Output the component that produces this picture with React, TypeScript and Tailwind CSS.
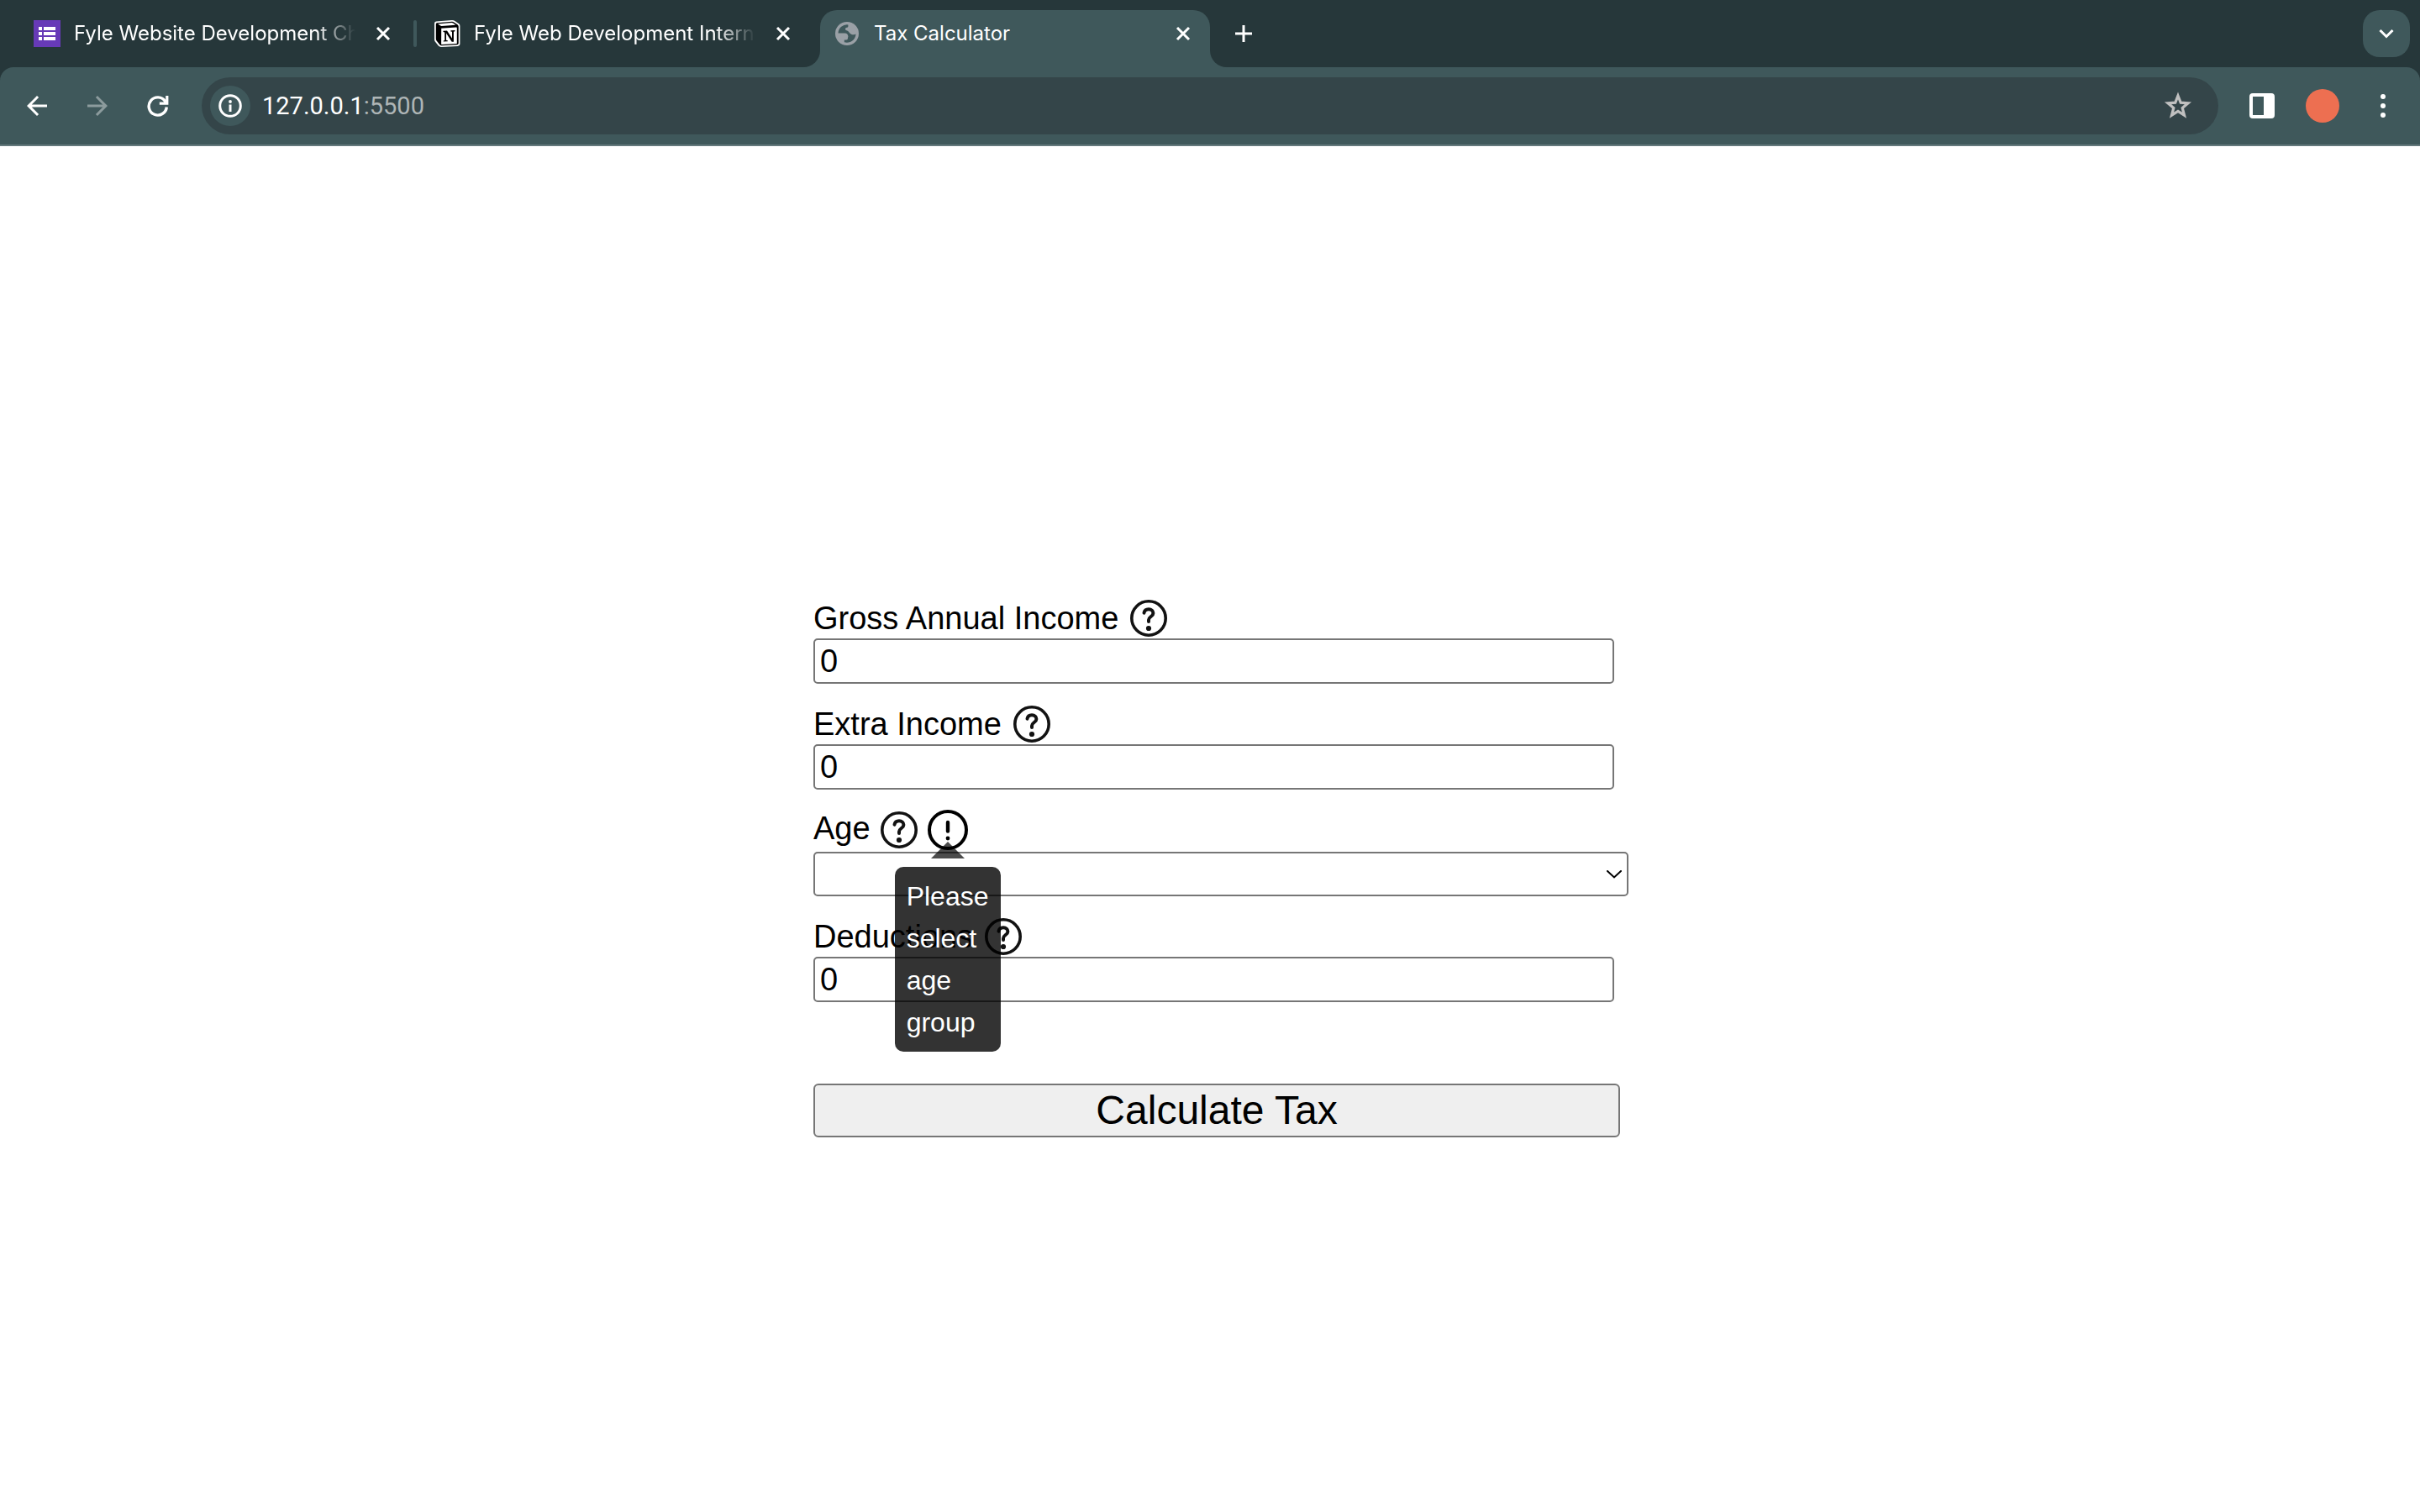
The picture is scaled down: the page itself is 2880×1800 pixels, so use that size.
import React from "react";
import { MdArrowBack, MdArrowForward } from "react-icons/md";

function CloseIcon() {
  return (
    <svg viewBox="0 0 18 18" className="size-[18px]" fill="none" stroke="currentColor" strokeWidth="3">
      <path d="M2 2 16 16M16 2 2 16" />
    </svg>
  );
}

function FormsIcon() {
  return (
    <svg viewBox="0 0 32 32" className="size-8 shrink-0">
      <path fill="#673ab7" d="M0 0h32v32H0z" />
      <path fill="#fff" d="M6 8h4v4H6zM6 14h4v4H6zM6 20h4v4H6zM12 8h14v4H12zM12 14h14v4H12zM12 20h14v4H12z" />
    </svg>
  );
}

function NotionIcon() {
  return (
    <svg viewBox="0 0 32 32" className="size-8 shrink-0">
      <path fill="#fff" d="M3 1.600 22 0q2 0 3.400 1l5 3.600Q31.400 5.500 31.400 7v21q0 2.600-2.800 2.900L9 32q-2 0-3.200-1.400L1.600 25.300Q1 24.300 1 23V4q0-2.200 2-2.400z" />
      <path fill="#000" d="m4 3.300 18-1.500q1.300 0 2.200.7l4.500 3.100q1 .8 1 2v20q0 1.500-1.600 1.600L9.500 30.300q-1.400 0-2.200-1L3.400 24.200q-.6-.8-.6-2V4.700q0-1.300 1.200-1.400z" />
      <path fill="#fff" d="m5 4.400 16.500-1.300q1 0 1.700.5l3 2.100L9.500 6.900q-1 0-1.700-.6zM9.200 9.700 27 8.600q.8 0 .8.800v17.800q0 .8-.8.900L10 29.100q-.9 0-.9-.9z" />
      <path fill="#000" d="M11.500 12.800 16 12.500l6 9.200v-7.900l-1.600-.3v-1.200l5-.3v1.200l-1.500.5v12l-2.200.1-6.700-10.200v8.200l1.800.4v1.100l-5.100.3v-1.100l1.500-.5V14.500l-1.700-.4z" />
    </svg>
  );
}

function GlobeIcon() {
  return (
    <svg viewBox="0 0 28 28" className="size-7 shrink-0">
      <circle cx="14" cy="14" r="14" fill="#9aa0a6" />
      <path
        fill="#3f585b"
        d="M3.500 13.500A10.600 10.600 0 0 1 15.400 3.400V5.200Q15.400 6.700 13.800 6.700 12 6.700 12 8.400 12 10 13.500 10.300 15.400 10.700 16.300 12.300 17.500 14.300 20 15.300 22.500 15.600 24.500 14.500A10.600 10.600 0 0 1 10.800 24.200V21.500H13.200Q15 21.500 15 19.600 15 18.500 15.400 17.500 15 13.500 11.500 13.500z"
      />
    </svg>
  );
}

function ReloadIcon() {
  return (
    <svg viewBox="0 0 26 26" className="size-[26px]">
      <path fill="none" stroke="#fff" strokeWidth="3.400" d="M21.500 7.500A10.600 10.600 0 1 0 23.300 14.500" />
      <path fill="#fff" d="M22.200 1H25.400V11.800H14.800V8.600H19.800L22.200 6z" />
    </svg>
  );
}

function HelpIcon() {
  return (
    <svg viewBox="0 0 44 44" className="size-11" fill="none" stroke="#121212" strokeWidth="3.600">
      <circle cx="22" cy="22" r="20.200" />
      <path
        strokeLinecap="round"
        strokeWidth="4"
        d="M16.500 15.700C17 12.700 19 11.300 22 11.300c3.400 0 5.400 2 5.400 4.600 0 4.100-5.400 4.100-5.400 8.100v2"
      />
      <circle cx="22" cy="34" r="3.100" fill="#121212" stroke="none" />
    </svg>
  );
}

function AlertIcon() {
  return (
    <svg viewBox="0 0 48 48" className="size-12" fill="none" stroke="#000" strokeWidth="4">
      <circle cx="24" cy="24" r="22" />
      <path strokeLinecap="round" strokeWidth="4.400" d="M24 15v10.500" />
      <circle cx="24" cy="34" r="2.400" fill="#000" stroke="none" />
    </svg>
  );
}

function BackgroundTab({ icon, title, className }: { icon: React.ReactNode; title: string; className: string }) {
  return (
    <div className={"flex h-20 items-center " + className}>
      {icon}
      <a
        href="#"
        className="ml-4 flex-1 overflow-hidden whitespace-nowrap [mask-image:linear-gradient(to_right,black_86%,transparent)]"
      >
        {title}
      </a>
      <button type="button" aria-label={"Close " + title} className="ml-6">
        <CloseIcon />
      </button>
    </div>
  );
}

function TabStrip() {
  return (
    <div className="flex h-20 items-center bg-[#26373a] pr-3 text-[24px] leading-8">
      <BackgroundTab icon={<FormsIcon />} title="Fyle Website Development Challenge" className="w-[465px] pl-10" />
      <div className="ml-[27px] h-8 w-1 rounded-full bg-[#3f585b]" />
      <BackgroundTab icon={<NotionIcon />} title="Fyle Web Development Internship" className="ml-5 w-[425px]" />
      <div className="ml-[15px] flex h-20 w-5 flex-col justify-end bg-[#3f585b]">
        <div className="h-full rounded-br-[20px] bg-[#26373a]" />
      </div>
      <div className="flex h-[68px] w-[464px] items-center self-end rounded-t-[20px] bg-[#3f585b] pb-3 pl-[18px]">
        <GlobeIcon />
        <a href="#" className="ml-[18px] flex-1">Tax Calculator</a>
        <button type="button" aria-label="Close Tax Calculator" className="mr-[23px]">
          <CloseIcon />
        </button>
      </div>
      <div className="h-20 w-5 bg-[#3f585b]">
        <div className="h-full rounded-bl-[20px] bg-[#26373a]" />
      </div>
      <button type="button" aria-label="New tab" className="ml-[10px]">
        <svg viewBox="0 0 20 20" className="size-5" stroke="currentColor" strokeWidth="3">
          <path d="M10 0v20M0 10h20" />
        </svg>
      </button>
      <button
        type="button"
        aria-label="Search tabs"
        className="ml-auto flex size-14 items-center justify-center rounded-[20px] bg-[#3f585b]"
      >
        <svg viewBox="0 0 18 12" className="h-3 w-[18px]" fill="none" stroke="currentColor" strokeWidth="3">
          <path d="m1.500 2 7.500 7.500L16.500 2" />
        </svg>
      </button>
    </div>
  );
}

function Toolbar() {
  return (
    <div className="bg-[#26373a]">
      <div className="flex h-[94px] items-center rounded-t-[16px] border-b-2 border-[#64797c] bg-[#3f585b] pl-[26px]">
        <button type="button" aria-label="Back"><MdArrowBack className="size-9" /></button>
        <button type="button" aria-label="Forward" className="ml-9 text-[#8c9b9d]"><MdArrowForward className="size-9" /></button>
        <button type="button" aria-label="Reload" className="ml-[41px]"><ReloadIcon /></button>
        <div className="ml-[39px] flex h-[68px] flex-1 items-center rounded-full bg-[#344549] pl-[10px] pr-[31px]">
          <button
            type="button"
            aria-label="View site information"
            className="flex size-12 items-center justify-center rounded-full bg-[#3f585b]"
          >
            <svg viewBox="0 0 28 28" className="size-7" fill="none" stroke="#fff" strokeWidth="3">
              <circle cx="14" cy="14" r="12.300" />
              <path d="M14 12.500V21" />
              <circle cx="14" cy="9" r="1.900" fill="#fff" stroke="none" />
            </svg>
          </button>
          <a href="#" className="ml-[14px] font-['Roboto',sans-serif] text-[29px] leading-9">
            127.0.0.1<span className="text-[#aeb5b6]">:5500</span>
          </a>
          <button type="button" aria-label="Bookmark this tab" className="ml-auto text-[#c0c0c0]">
            <svg viewBox="0 0 34 34" className="size-[34px]" fill="none" stroke="currentColor" strokeWidth="3.200">
              <path d="M17 5 20.200 13.200 29 13.800 22.200 19.500 24.500 28.200 17 23.500 9.500 28.200 11.800 19.500 5 13.800 13.800 13.200z" />
            </svg>
          </button>
        </div>
        <button type="button" aria-label="Side panel" className="ml-[37px]">
          <svg viewBox="0 0 30 30" className="size-[30px]">
            <rect x="2" y="2" width="26" height="26" rx="2" fill="none" stroke="#fff" strokeWidth="4" />
            <path fill="#fff" d="M17 2h11v26H17z" />
          </svg>
        </button>
        <button type="button" aria-label="Profile" className="ml-[37px] size-10 rounded-full bg-[#ed6f51]" />
        <button type="button" aria-label="Menu" className="ml-[49px] mr-[41px]">
          <svg viewBox="0 0 6 28" className="h-7 w-[6px]" fill="#fff">
            <circle cx="3" cy="3" r="3" />
            <circle cx="3" cy="14" r="3" />
            <circle cx="3" cy="25" r="3" />
          </svg>
        </button>
      </div>
    </div>
  );
}

function NumberField({ id, label }: { id: string; label: string }) {
  return (
    <div>
      <div className="flex items-center gap-[14px] pb-[2px]">
        <label htmlFor={id} className="leading-[44px]">{label}</label>
        <button type="button" aria-label={"About " + label}><HelpIcon /></button>
      </div>
      <input
        id={id}
        type="text"
        inputMode="numeric"
        defaultValue="0"
        className="block h-[54px] w-[calc(100%-7px)] rounded-[5px] border-2 border-[#767676] bg-white px-[6px]"
      />
    </div>
  );
}

function AgeField() {
  return (
    <div>
      <div className="flex items-center gap-3 pb-[2px]">
        <label htmlFor="age" className="self-start leading-[44px]">Age</label>
        <button type="button" aria-label="About Age"><HelpIcon /></button>
        <div className="relative">
          <button type="button" aria-label="Age error" aria-describedby="age-error" className="block">
            <AlertIcon />
          </button>
          <svg viewBox="0 0 40 20" className="absolute left-1 top-[38px] z-10 h-5 w-10">
            <path fill="#000" fillOpacity="0.7" d="M20 0 40 20H0z" />
          </svg>
          <div
            id="age-error"
            role="tooltip"
            className="absolute left-1/2 top-[68px] z-10 w-[126px] -translate-x-1/2 rounded-[10px] bg-black/80 px-[14px] py-[10px] text-[32px] leading-[50px] text-white"
          >
            Please select age group
          </div>
        </div>
      </div>
      <div className="relative w-[calc(100%+10px)]">
        <select
          id="age"
          defaultValue=""
          className="block h-[53px] w-full appearance-none rounded-[5px] border-2 border-[#767676] bg-white px-[6px]"
        >
          <option value="" />
        </select>
        <svg
          viewBox="0 0 18 10"
          className="pointer-events-none absolute right-2 top-1/2 h-[10px] w-[18px] -translate-y-1/2"
          fill="none"
          stroke="#000"
          strokeWidth="2"
          strokeLinecap="round"
        >
          <path d="m1 1 8 7.500L17 1" />
        </svg>
      </div>
    </div>
  );
}

export default function App() {
  return (
    <div className="flex min-h-screen flex-col bg-white">
      <header className="font-['Inter',sans-serif] text-white">
        <TabStrip />
        <Toolbar />
      </header>
      <main className="flex flex-1 justify-center pl-4 pt-[540px] font-['Liberation_Sans',sans-serif] text-[38px] text-black">
        <form className="flex w-[960px] flex-col gap-[26px]" onSubmit={(e) => e.preventDefault()}>
          <NumberField id="gross" label="Gross Annual Income" />
          <div className="flex flex-col gap-6">
            <NumberField id="extra" label="Extra Income" />
            <AgeField />
          </div>
          <NumberField id="deductions" label="Deductions" />
          <button
            type="submit"
            className="mt-[71px] h-16 rounded-[6px] border-2 border-[#767676] bg-[#efefef] text-[48px] leading-[60px]"
          >
            Calculate Tax
          </button>
        </form>
      </main>
    </div>
  );
}
